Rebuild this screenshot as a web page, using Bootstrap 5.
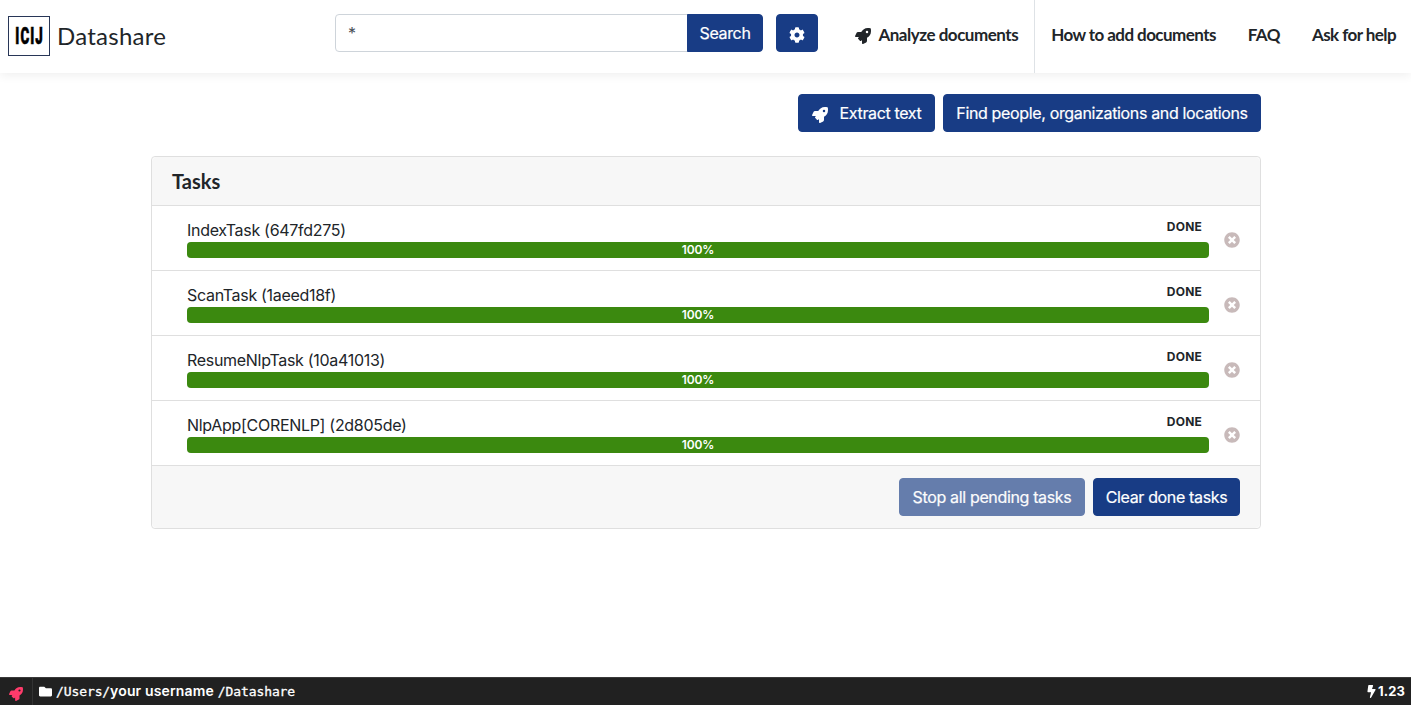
<!DOCTYPE html>
<html lang="en">
<head>
<meta charset="utf-8">
<meta name="viewport" content="width=device-width, initial-scale=1">
<title>Datashare</title>
<link href="https://cdn.jsdelivr.net/npm/bootstrap@5.3.0/dist/css/bootstrap.min.css" rel="stylesheet">
<style>
body{font-family:Inter,"Liberation Sans",sans-serif;font-size:16px;color:#212529;letter-spacing:-.35px;overflow:hidden}
.ico{width:1em;height:1em;fill:currentColor;flex:none}
.btn{--bs-btn-border-radius:4px;letter-spacing:-.35px;white-space:nowrap;-webkit-text-stroke:.2px}
.btn-primary{--bs-btn-bg:#183c85;--bs-btn-border-color:#183c85;--bs-btn-disabled-bg:#183c85;--bs-btn-disabled-border-color:#183c85}
.app-header{height:73px;box-shadow:0 2px 10px rgba(0,0,0,.07)}
.brand{width:335px;padding:16px 0 0 8px}
.brand-box{width:42px;height:40px;border:1px solid #283657;color:#000;font:900 23px/39px Roboto,sans-serif;letter-spacing:1.8px}
.brand-box span{transform:scaleX(.58);margin-right:-1px;flex:none;-webkit-text-stroke:.6px}
.brand-name{font:400 24px/39px Lato,sans-serif;letter-spacing:.25px;margin-left:7px}
.search-box{width:428px;margin-top:14px}
.search-box .form-control{border-color:#ced4da;border-radius:4px;height:38px;color:#495057}
.search-btn{width:76px;padding-left:0;padding-right:0}
.cog-btn{width:42px;height:38px;margin:14px 0 0 13px;padding:4px 0 0}
.app-nav{font:700 17px/24px Lato,sans-serif;letter-spacing:-.56px}
.app-nav a{color:#212529;text-decoration:none;padding:0 16px 4px;white-space:nowrap;height:73px}
.app-nav .first{border-right:1px solid #dee2e6;letter-spacing:-.48px}
.app-nav .last{padding-right:15px}
.nav-rocket{font-size:16px;margin:3px 7px 0 0}
.page{width:1110px;margin-left:151px;padding-top:21px}
.page .btn{height:38px;padding-left:0;padding-right:0}
.extract-btn{width:137px}.find-btn{width:318px}.stop-btn{width:186px}.clear-btn{width:147px}
.extract-btn .ico{margin:4px 12px 0 0}
.tasks{border-color:#dfdfdf;border-radius:4px;margin-top:24px}
.tasks .card-header{height:49px;background:#f7f7f7;border-color:#dfdfdf;padding:0 20px;font:700 20px/49px Lato,sans-serif;letter-spacing:0}
.task{height:65px;border-bottom:1px solid #dfdfdf;padding:12px 20px 0 35px}
.task-name{line-height:24px;letter-spacing:-.3px}
.task-state{font-size:12px;font-weight:700;line-height:18px;letter-spacing:.2px;margin-right:7px}
.task .progress{height:16px;border-radius:4px;--bs-progress-bar-bg:#3b890f;font-size:12px;letter-spacing:-.1px}
.task .progress-bar{font-weight:600}
.task .ico{color:#c8baba;margin:14px 0 0 15px}
.tasks .card-footer{height:62px;background:#f7f7f7;border:0;padding:12px 20px}
.status{height:28px;background:#212121;color:#fff;border-top:1px solid #3a3a3a;font-size:13px;letter-spacing:0}
.status-run{width:33px;border-right:1px solid #333;color:#ff3b6b;padding-top:5px}
.status-run .ico{font-size:14px}
.status-path{padding-left:6px}
.path-text{font:400 13px/26px "DejaVu Sans Mono",monospace;letter-spacing:-.1px;-webkit-text-stroke:.3px}
.path-text b{font:600 14px/26px Inter,sans-serif;letter-spacing:.14px;-webkit-text-stroke:0}
.version{padding-right:6px;letter-spacing:.1px;font-weight:700}
</style>
</head>
<body class="vh-100 d-flex flex-column bg-white">
<svg class="d-none">
<symbol id="rocket" viewBox="0 0 512 512"><path d="M505.12 19.094c-1.19-5.531-6.658-11-12.207-12.188C460.716 0 435.507 0 410.407 0 307.175 0 245.27 55.203 199.052 128H94.838c-16.348.016-35.557 11.875-42.887 26.484L2.516 253.297A28.4 28.4 0 0 0 0 264a24.009 24.009 0 0 0 24.006 24h103.81l-22.474 22.469c-11.366 11.361-12.996 32.258 0 45.25l50.904 50.906c11.156 11.188 32.156 13.156 45.277 0l22.475-22.469V488a24.009 24.009 0 0 0 24.006 24 28.56 28.56 0 0 0 10.707-2.516l98.728-49.39c14.629-7.297 26.508-26.5 26.508-42.86V312.797c72.597-46.313 128.035-108.406 128.035-211.094.093-25.203.093-50.406-6.862-82.609ZM384.04 168A40 40 0 1 1 424.05 128a40.023 40.023 0 0 1-40.01 40Z"/></symbol>
<symbol id="cog" viewBox="0 0 512 512"><path d="M487.4 315.7l-42.6-24.6c4.3-23.2 4.3-47 0-70.2l42.6-24.6c4.9-2.8 7.1-8.6 5.5-14-11.1-35.6-30-67.8-54.7-94.6-3.8-4.1-10-5.1-14.8-2.3L380.8 110c-17.9-15.4-38.5-27.3-60.8-35.1V25.8c0-5.6-3.9-10.5-9.4-11.7-36.7-8.2-74.3-7.8-109.2 0-5.5 1.2-9.4 6.1-9.4 11.7V75c-22.2 7.9-42.8 19.8-60.8 35.1L88.7 85.5c-4.9-2.8-11-1.9-14.8 2.3-24.7 26.7-43.6 58.9-54.7 94.6-1.7 5.4.6 11.2 5.5 14L67.3 221c-4.3 23.2-4.3 47 0 70.2l-42.6 24.6c-4.9 2.8-7.1 8.6-5.5 14 11.1 35.6 30 67.8 54.7 94.6 3.8 4.1 10 5.1 14.8 2.3l42.6-24.6c17.9 15.4 38.5 27.3 60.8 35.1v49.2c0 5.6 3.9 10.5 9.4 11.7 36.7 8.2 74.3 7.8 109.2 0 5.5-1.2 9.4-6.1 9.4-11.7v-49.2c22.2-7.9 42.8-19.8 60.8-35.1l42.6 24.6c4.9 2.8 11 1.9 14.8-2.3 24.7-26.7 43.6-58.9 54.7-94.6 1.5-5.5-.7-11.3-5.6-14.1zM256 336c-44.1 0-80-35.9-80-80s35.9-80 80-80 80 35.9 80 80-35.9 80-80 80z"/></symbol>
<symbol id="times" viewBox="0 0 512 512"><path d="M256 8C119 8 8 119 8 256s111 248 248 248 248-111 248-248S393 8 256 8zm121.6 313.1c4.7 4.7 4.7 12.3 0 17L338 377.6c-4.7 4.7-12.3 4.7-17 0L256 312l-65.1 65.6c-4.7 4.7-12.3 4.7-17 0L134.4 338c-4.7-4.7-4.7-12.3 0-17l65.6-65-65.6-65.1c-4.7-4.7-4.7-12.3 0-17l39.6-39.6c4.7-4.7 12.3-4.7 17 0l65 65.7 65.1-65.6c4.7-4.7 12.3-4.7 17 0l39.6 39.6c4.7 4.7 4.7 12.3 0 17L312 256l65.6 65.1z"/></symbol>
<symbol id="folder" viewBox="0 0 512 512"><path d="M464 128H272l-64-64H48C21.49 64 0 85.49 0 112v288c0 26.51 21.49 48 48 48h416c26.51 0 48-21.49 48-48V176c0-26.51-21.49-48-48-48z"/></symbol>
<symbol id="bolt" viewBox="0 0 320 512"><path d="M296 160H180.6l42.6-129.8C227.2 15 215.7 0 200 0H56C44 0 33.8 8.9 32.2 20.8l-32 240C-1.7 275.2 9.5 288 24 288h118.7L96.6 482.5c-3.6 15.2 8 29.5 23.3 29.5 8.4 0 16.4-4.4 20.8-12l176-304c9.3-15.9-2.2-36-20.7-36z"/></symbol>
</svg>

<header class="app-header d-flex align-items-start">
  <div class="brand d-flex">
    <div class="brand-box d-flex justify-content-center"><span>ICIJ</span></div>
    <div class="brand-name">Datashare</div>
  </div>
  <div class="search-box input-group flex-nowrap">
    <input class="form-control" value="*" aria-label="Search">
    <button class="btn btn-primary search-btn">Search</button>
  </div>
  <button class="btn btn-primary cog-btn d-flex align-items-center justify-content-center" aria-label="Settings"><svg class="ico"><use href="#cog"/></svg></button>
  <nav class="app-nav d-flex ms-auto">
    <a class="first d-flex align-items-center" href="#"><svg class="ico nav-rocket"><use href="#rocket"/></svg>Analyze documents</a>
    <a class="d-flex align-items-center" href="#">How to add documents</a>
    <a class="d-flex align-items-center" href="#">FAQ</a>
    <a class="last d-flex align-items-center" href="#">Ask for help</a>
  </nav>
</header>

<main class="page flex-grow-1">
  <div class="d-flex justify-content-end gap-2">
    <button class="btn btn-primary extract-btn d-flex align-items-center justify-content-center"><svg class="ico"><use href="#rocket"/></svg>Extract text</button>
    <button class="btn btn-primary find-btn">Find people, organizations and locations</button>
  </div>
  <section class="card tasks">
    <div class="card-header">Tasks</div>
    <div class="task d-flex">
      <div class="flex-grow-1">
        <div class="d-flex justify-content-between"><span class="task-name">IndexTask (647fd275)</span><span class="task-state">DONE</span></div>
        <div class="progress"><div class="progress-bar" style="width:100%">100%</div></div>
      </div><svg class="ico"><use href="#times"/></svg>
    </div>
    <div class="task d-flex">
      <div class="flex-grow-1">
        <div class="d-flex justify-content-between"><span class="task-name">ScanTask (1aeed18f)</span><span class="task-state">DONE</span></div>
        <div class="progress"><div class="progress-bar" style="width:100%">100%</div></div>
      </div><svg class="ico"><use href="#times"/></svg>
    </div>
    <div class="task d-flex">
      <div class="flex-grow-1">
        <div class="d-flex justify-content-between"><span class="task-name">ResumeNlpTask (10a41013)</span><span class="task-state">DONE</span></div>
        <div class="progress"><div class="progress-bar" style="width:100%">100%</div></div>
      </div><svg class="ico"><use href="#times"/></svg>
    </div>
    <div class="task d-flex">
      <div class="flex-grow-1">
        <div class="d-flex justify-content-between"><span class="task-name">NlpApp[CORENLP] (2d805de)</span><span class="task-state">DONE</span></div>
        <div class="progress"><div class="progress-bar" style="width:100%">100%</div></div>
      </div><svg class="ico"><use href="#times"/></svg>
    </div>
    <div class="card-footer d-flex justify-content-end gap-2">
      <button class="btn btn-primary stop-btn" disabled>Stop all pending tasks</button>
      <button class="btn btn-primary clear-btn">Clear done tasks</button>
    </div>
  </section>
</main>

<footer class="status d-flex align-items-stretch">
  <div class="status-run d-flex align-items-center justify-content-center"><svg class="ico"><use href="#rocket"/></svg></div>
  <div class="status-path d-flex align-items-center"><svg class="ico me-1"><use href="#folder"/></svg><span class="path-text">/Users/<b>your username</b><span class="ms-1">/Datashare</span></span></div>
  <div class="version d-flex align-items-center ms-auto"><svg class="ico"><use href="#bolt"/></svg><span>1.23</span></div>
</footer>
<script src="https://cdn.jsdelivr.net/npm/bootstrap@5.3.0/dist/js/bootstrap.bundle.min.js"></script>
</body>
</html>
